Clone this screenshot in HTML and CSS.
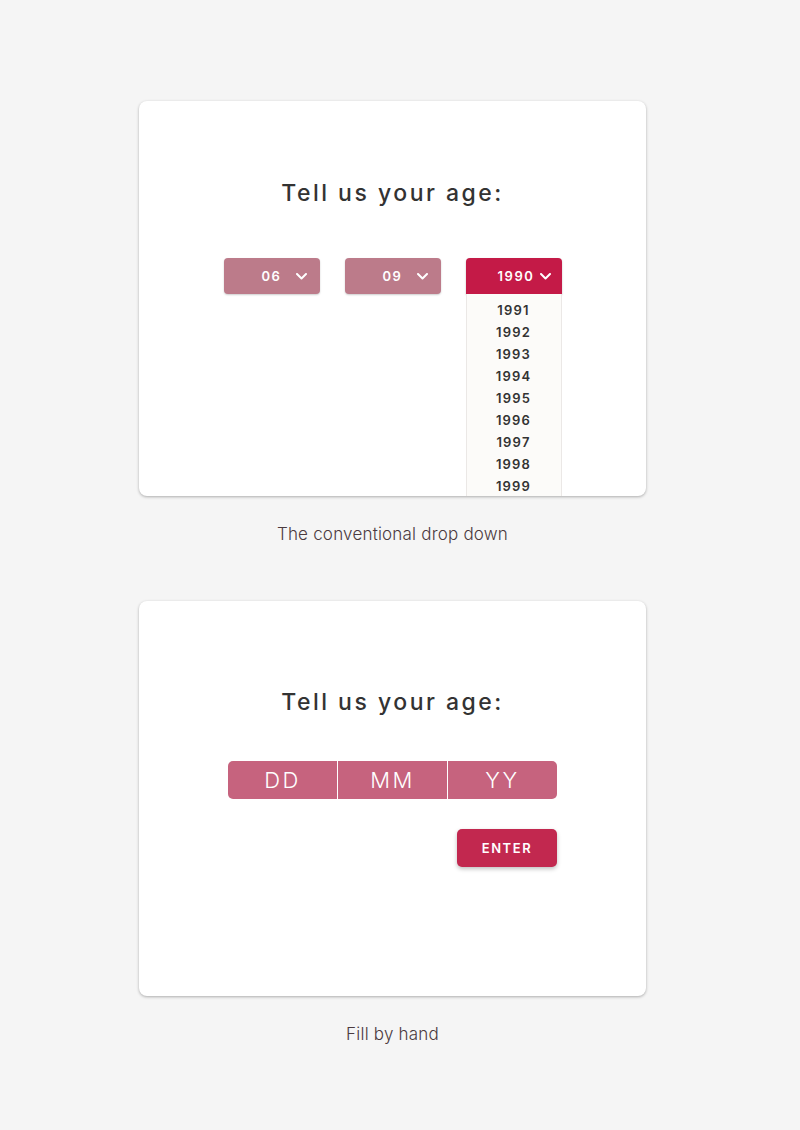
FILE: index.html
```html
<!DOCTYPE html>
<html lang="en">
<head>
    <meta charset="UTF-8">
    <title>Age Input</title>
    <link rel="stylesheet" href="styles.css">
</head>
<body>

    <div class="page">
        <!-- Conventional drop down -->
        <div class="card card-dropdown">
            <h1 class="title">Tell us your age:</h1>
            <div class="selects">
                <div class="select muted">
                    <span>06</span>
                    <svg class="chevron" width="11" height="7" viewBox="0 0 11 7"><polyline points="1,1 5.5,5.5 10,1"/></svg>
                </div>
                <div class="select muted">
                    <span>09</span>
                    <svg class="chevron" width="11" height="7" viewBox="0 0 11 7"><polyline points="1,1 5.5,5.5 10,1"/></svg>
                </div>
                <div class="select active">
                    <span>1990</span>
                    <svg class="chevron" width="11" height="7" viewBox="0 0 11 7"><polyline points="1,1 5.5,5.5 10,1"/></svg>
                    <ul class="options">
                        <li>1991</li>
                        <li>1992</li>
                        <li>1993</li>
                        <li>1994</li>
                        <li>1995</li>
                        <li>1996</li>
                        <li>1997</li>
                        <li>1998</li>
                        <li>1999</li>
                        <li>2000</li>
                    </ul>
                </div>
            </div>
        </div>
        <p class="caption">The conventional drop down</p>

        <!-- Fill by hand -->
        <div class="card card-manual">
            <h1 class="title">Tell us your age:</h1>
            <div class="fields">
                <div class="field">DD</div>
                <div class="field">MM</div>
                <div class="field">YY</div>
            </div>
            <div class="actions">
                <button class="enter">ENTER</button>
            </div>
        </div>
        <p class="caption">Fill by hand</p>
    </div>

</body>
</html>
```

FILE: styles.css
```css
/* --- General Page --- */
body {
    margin: 0;
    background-color: #f5f5f5;
    font-family: Inter, Roboto, Arial, sans-serif;
    color: #333;
}

.page {
    width: 507px;
    margin-left: 139px;
    padding-top: 101px;
    display: flex;
    flex-direction: column;
}

/* --- Cards --- */
.card {
    position: relative;
    height: 395px;
    box-sizing: border-box;
    background-color: #ffffff;
    border-radius: 8px;
    box-shadow: 0 1px 3px rgba(0, 0, 0, 0.3);
    overflow: hidden;
    display: flex;
    flex-direction: column;
    align-items: center;
}

.card-dropdown {
    padding-top: 79px;
}

.card-manual {
    padding-top: 88px;
}

.title {
    margin: 0;
    font-size: 23px;
    line-height: 26px;
    font-weight: 500;
    letter-spacing: 2.5px;
    color: #333;
}

.caption {
    margin: 26px 0 55px;
    text-align: center;
    font-size: 17px;
    line-height: 24px;
    font-weight: 300;
    letter-spacing: 0.2px;
    color: #4b3a3f;
}

/* --- Drop down selects --- */
.selects {
    display: flex;
    gap: 25px;
    margin-top: 52px;
}

.select {
    position: relative;
    width: 96px;
    height: 36px;
    box-sizing: border-box;
    border-radius: 4px;
    display: flex;
    align-items: center;
    justify-content: flex-end;
    gap: 14px;
    padding-right: 13px;
    color: #fff;
    font-size: 13px;
    font-weight: 600;
    letter-spacing: 1.6px;
}

.select.muted {
    background-color: #bc7b8a;
    box-shadow: 0 1px 2px rgba(0, 0, 0, 0.2);
}

.select.active {
    background-color: #c41a47;
    gap: 5px;
    padding-right: 11px;
    border-radius: 4px 4px 0 0;
    box-shadow: 0 1px 2px rgba(0, 0, 0, 0.25);
}

.chevron polyline {
    fill: none;
    stroke: #fff;
    stroke-width: 2;
    stroke-linecap: round;
    stroke-linejoin: round;
}

.options {
    position: absolute;
    top: 36px;
    left: 0;
    width: 96px;
    box-sizing: border-box;
    margin: 0;
    padding: 5px 0 0;
    list-style: none;
    background-color: #fcfbf9;
    border: 1px solid #ebe8e6;
    border-top: none;
    text-align: center;
    color: #333;
    font-size: 13px;
    line-height: 22px;
    font-weight: 600;
    letter-spacing: 1.2px;
}

/* --- Fill by hand --- */
.fields {
    display: flex;
    margin-top: 46px;
    border-radius: 5px;
    overflow: hidden;
}

.field {
    width: 109px;
    height: 38px;
    background-color: #c6637e;
    color: #fff;
    display: flex;
    align-items: center;
    justify-content: center;
    font-size: 22px;
    font-weight: 300;
    letter-spacing: 2.5px;
}

.field + .field {
    border-left: 1px solid #fff;
}

.actions {
    width: 329px;
    display: flex;
    justify-content: flex-end;
    margin-top: 30px;
}

.enter {
    width: 100px;
    height: 38px;
    border: none;
    border-radius: 5px;
    background-color: #c2284f;
    color: #fff;
    font-family: inherit;
    font-size: 13px;
    font-weight: 600;
    letter-spacing: 1.6px;
    box-shadow: 0 2px 4px rgba(0, 0, 0, 0.25);
    cursor: pointer;
}
```
